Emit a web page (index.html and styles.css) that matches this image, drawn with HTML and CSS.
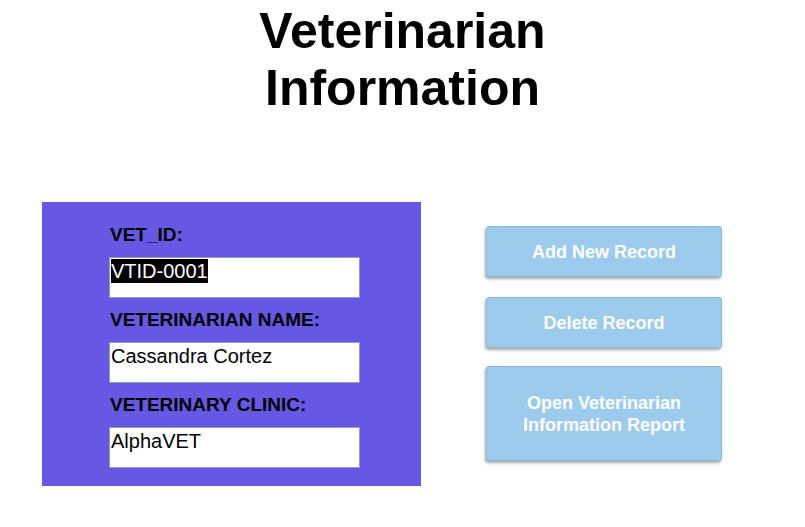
FILE: index.html
```html
<!DOCTYPE html>
<html>
<head>
<meta charset="utf-8">
<link rel="stylesheet" href="styles.css">
</head>
<body>
<h1 class="title">Veterinarian<br>Information</h1>
<div class="main">
  <div class="panel">
    <div class="label">VET_ID:</div>
    <div class="field"><span class="sel">VTID-0001</span></div>
    <div class="label">VETERINARIAN NAME:</div>
    <div class="field">Cassandra Cortez</div>
    <div class="label">VETERINARY CLINIC:</div>
    <div class="field">AlphaVET</div>
  </div>
  <div class="buttons">
    <div class="btn btn-short">Add New Record</div>
    <div class="btn btn-short btn-second">Delete Record</div>
    <div class="btn btn-tall">Open Veterinarian<br>Information Report</div>
  </div>
</div>
</body>
</html>
```
FILE: styles.css
```css
html, body {
  margin: 0;
  padding: 0;
  background: #ffffff;
  font-family: "Liberation Sans", Arial, sans-serif;
}
.title {
  margin: 3px 0 0 0;
  text-align: center;
  font-size: 50px;
  line-height: 57px;
  font-weight: bold;
  color: #000;
}
.main {
  display: flex;
  align-items: flex-start;
  margin-top: 85px;
  padding-left: 42px;
}
.panel {
  width: 379px;
  height: 284px;
  box-sizing: border-box;
  background: #6558e2;
  padding: 22px 0 0 67px;
  display: flex;
  flex-direction: column;
  align-items: flex-start;
}
.label {
  font-size: 19px;
  font-weight: bold;
  line-height: 22px;
  color: #000;
  margin-left: 1px;
  margin-bottom: 11px;
}
.field {
  width: 251px;
  height: 41px;
  box-sizing: border-box;
  background: #fff;
  border: 1px solid #9c99b4;
  font-size: 20px;
  line-height: 24px;
  padding: 1px 0 0 1px;
  color: #000;
  margin-bottom: 11px;
}
.field:last-child {
  margin-bottom: 0;
}
.sel {
  background: #000;
  color: #fff;
  display: inline-block;
  line-height: 24px;
  margin-top: -1px;
}
.buttons {
  margin-left: 65px;
  margin-top: 24px;
  display: flex;
  flex-direction: column;
}
.btn {
  width: 236px;
  box-sizing: border-box;
  background: #9ccbee;
  border: 1px solid #8db8de;
  border-radius: 3px;
  box-shadow: -1px 2px 3px rgba(0, 0, 0, 0.35);
  color: #fff;
  font-weight: bold;
  font-size: 18px;
  line-height: 22px;
  text-align: center;
  display: flex;
  align-items: center;
  justify-content: center;
}
.btn-short {
  height: 51px;
  margin-bottom: 20px;
}
.btn-second {
  margin-bottom: 18px;
}
.btn-tall {
  height: 95px;
}
```
